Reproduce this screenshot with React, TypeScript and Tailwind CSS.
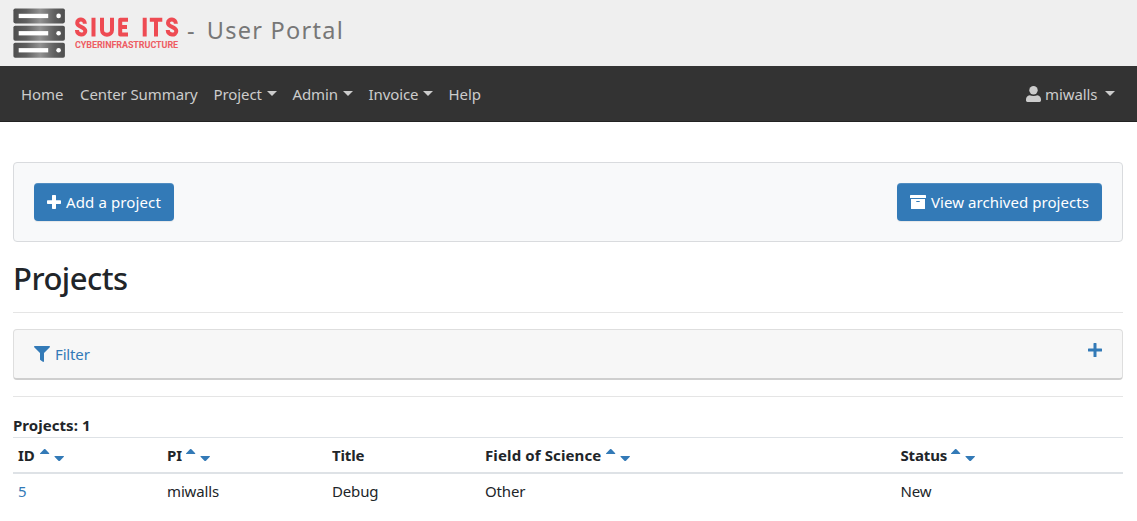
import type { ReactNode } from "react";
import { FaFilter } from "react-icons/fa";

function Caret({ className = "" }: { className?: string }) {
  return (
    <svg className={"h-[5px] w-[10px] shrink-0 " + className} viewBox="0 0 10 5" fill="currentColor">
      <path d="M0 0H10L5 5Z" />
    </svg>
  );
}

function Plus({ thick = false }: { thick?: boolean }) {
  return (
    <svg className="h-[14px] w-[14px] shrink-0" viewBox="0 0 14 14" fill="currentColor">
      {thick ? (
        <path d="M5.7 0h2.6q.7 0 .7.7V5.2h4.3q.7 0 .7.7v2.3q0 .7-.7.7H9v4.4q0 .7-.7.7H5.7q-.7 0-.7-.7V8.9H.7q-.7 0-.7-.7V5.9q0-.7.7-.7H5V.7q0-.7.7-.7Z" />
      ) : (
        <path d="M6 0h2q.5 0 .5.5V5.5h5q.5 0 .5.5v2q0 .5-.5.5h-5v5q0 .5-.5.5H6q-.5 0-.5-.5v-5h-5Q0 8.500 0 8V6q0-.5.5-.5h5V.5Q5.500 0 6 0Z" />
      )}
    </svg>
  );
}

function UserIcon() {
  return (
    <svg className="h-4 w-[15px] shrink-0" viewBox="0 0 15 16" fill="currentColor">
      <circle cx="7.500" cy="4.200" r="4.200" />
      <path d="M3.700 9.200C4.700 9.600 6 9.900 7.500 9.900S10.300 9.600 11.300 9.200C13.700 9.500 15 11.200 15 13.600V14.600Q15 16 13.600 16H1.400Q0 16 0 14.600V13.600C0 11.200 1.300 9.500 3.700 9.200Z" />
    </svg>
  );
}

function ArchiveIcon() {
  return (
    <svg className="h-[14px] w-4 shrink-0" viewBox="0 0 16 14" fill="currentColor">
      <path d="M.5 0h15q.5 0 .5.5V3H0V.5Q0 0 .5 0Z" />
      <path fillRule="evenodd" d="M1 4h14v9.400q0 .6-.6.6H1.600q-.6 0-.6-.6ZM6.300 6v1h3.400V6Z" />
    </svg>
  );
}

function SortArrows({ className = "ml-[5px]" }: { className?: string }) {
  return (
    <svg className={"h-3 w-6 shrink-0 " + className} viewBox="0 0 24 12" fill="#337ab7">
      <path d="M0 5Q-.2 4.600.2 4.200L4 .2Q4.700-.3 5.400.2L9.200 4.200Q9.500 4.700 9 5Z" />
      <path d="M14.600 7H23.800Q24.100 7.500 23.600 8L20 11.700Q19.200 12.300 18.400 11.700L14.800 8Q14.300 7.500 14.600 7Z" />
    </svg>
  );
}

function Logo() {
  return (
    <svg className="h-[66px] w-[180px] shrink-0 overflow-visible" viewBox="0 0 180 66">
      <defs>
        <linearGradient id="steel" x1="0" x2="1">
          <stop offset="0" stopColor="#4e4e4e" />
          <stop offset="0.25" stopColor="#606060" />
          <stop offset="0.52" stopColor="#929292" />
          <stop offset="0.8" stopColor="#606060" />
          <stop offset="1" stopColor="#4e4e4e" />
        </linearGradient>
      </defs>
      {[8.500, 25.800, 42.800].map((y) => (
        <g key={y}>
          <rect x="13.400" y={y} width="51.500" height="14.900" rx="1.800" fill="url(#steel)" />
          <rect x="18.700" y={y + 5.300} width="29.500" height="4.300" fill="#fff" />
          <circle cx="58.600" cy={y + 7.400} r="2.300" fill="#fff" />
        </g>
      ))}
      <g fill="none" stroke="#ee4b53" strokeWidth="4" strokeLinejoin="round">
        <path d="M84.900 23.800C84.900 18.300 77.200 18.300 77.200 23C77.200 27.400 85.300 26.200 85.300 31C85.300 36 76.900 35.800 76.900 30" />
        <path d="M93.500 17.800V36.500M102 17.800V30C102 36.200 112 36.200 112 30V17.800M128 19.700H120.200V34.600H128M120.200 27H127M144.700 17.800V36.500M149.800 19.700H162.300M156 19.700V36.500" />
        <path d="M175.900 23.800C175.900 18.300 168 18.300 168 23C168 27.400 176.300 26.200 176.300 31C176.300 36 167.700 35.800 167.700 30" />
      </g>
      <text x="75" y="48.200" textLength="103" fill="#ee5c63" fontFamily="Roboto, sans-serif" fontSize="9" fontWeight="700">
        CYBERINFRASTRUCTURE
      </text>
    </svg>
  );
}

function NavItem({ children, className, menu = false }: { children: ReactNode; className: string; menu?: boolean }) {
  return (
    <a className={"flex items-center whitespace-nowrap " + className} href="#">
      {children}
      {menu && <Caret className="-mt-px ml-auto" />}
    </a>
  );
}

export default function App() {
  return (
    <div className="h-[521px] overflow-hidden bg-white font-['Noto_Sans',sans-serif] text-[15px] leading-6 tracking-[-0.150px] text-[#212529]">
      <header className="flex h-[66px] items-center bg-[#efefef]">
        <Logo />
        <span className="ml-[7px] mt-[-6px] flex gap-[11px] whitespace-nowrap text-[23.500px] leading-8 tracking-[1.250px] text-[#777]">
          <span>-</span>
          <span>User Portal</span>
        </span>
      </header>
      <nav className="flex h-14 items-center border-b border-[#222] bg-[#333] pl-[21px] pr-[22px] tracking-[-0.100px] text-[#ccc]">
        <NavItem className="w-[59px]">Home</NavItem>
        <NavItem className="w-[133.500px]">Center Summary</NavItem>
        <NavItem className="mr-4 w-[63px]" menu>Project</NavItem>
        <NavItem className="mr-4 w-[60px]" menu>Admin</NavItem>
        <NavItem className="mr-4 w-16" menu>Invoice</NavItem>
        <NavItem className="">Help</NavItem>
        <a className="ml-auto flex w-[89px] items-center" href="#">
          <UserIcon />
          <span className="ml-1">miwalls</span>
          <Caret className="-mt-px ml-auto" />
        </a>
      </nav>
      <main className="pl-[13px] pr-[14px] pt-10">
        <section className="flex h-20 items-center justify-between rounded-[4px] border border-[#d9dbde] bg-[#f8f9fa] px-5">
          <button className="flex h-[38px] w-[140px] items-center rounded-[4px] bg-[#337ab7] pl-[13px] text-white shadow-[inset_0_1px_0_rgba(255,255,255,0.15),0_1px_1px_rgba(0,0,0,0.075)]">
            <Plus thick />
            <span className="ml-[5px] whitespace-nowrap tracking-[0.120px]">Add a project</span>
          </button>
          <button className="flex h-[38px] w-[205px] items-center rounded-[4px] bg-[#337ab7] pl-[13px] text-white shadow-[inset_0_1px_0_rgba(255,255,255,0.15),0_1px_1px_rgba(0,0,0,0.075)]">
            <ArchiveIcon />
            <span className="ml-[5px] whitespace-nowrap tracking-[0.050px]">View archived projects</span>
          </button>
        </section>
        <h2 className="mt-[17px] box-content h-[53px] border-b border-[#e5e5e5] text-[31px] font-medium leading-[38px] tracking-[-0.500px]">
          Projects
        </h2>
        <section className="mt-4 flex h-[51px] justify-between rounded-[4px] border border-b-2 border-[#dedede] border-b-[#cfcfcf] bg-[#f7f7f7] pl-5 pr-5 text-[#337ab7]">
          <a className="flex h-12 items-center" href="#">
            <FaFilter className="size-4" />
            <span className="ml-[5px]">Filter</span>
          </a>
          <span className="pt-[13px]">
            <Plus />
          </span>
        </section>
        <hr className="mt-4 border-[#e5e5e5]" />
        <p className="mt-4 h-6 font-bold tracking-[0.050px]">Projects: 1</p>
        <table className="w-full table-fixed border-collapse text-left">
          <colgroup>
            <col className="w-[149px]" />
            <col className="w-[165px]" />
            <col className="w-[153px]" />
            <col className="w-[415.500px]" />
            <col />
          </colgroup>
          <thead>
            <tr className="h-[35px] border-b-2 border-t border-b-[#dee2e6] border-t-[#dee2e6] font-bold">
              <th className="p-0 pl-[5px]"><span className="flex items-center">ID<SortArrows /></span></th>
              <th className="p-0 pl-[5px]"><span className="flex items-center">PI<SortArrows className="ml-1" /></span></th>
              <th className="p-0 pl-[5px]"><span className="flex items-center">Title</span></th>
              <th className="p-0 pl-[5px]"><span className="flex items-center tracking-[0.120px]">Field of Science<SortArrows /></span></th>
              <th className="p-0 pl-[5px]"><span className="flex items-center">Status<SortArrows className="ml-1" /></span></th>
            </tr>
          </thead>
          <tbody>
            <tr className="h-[35px]">
              <td className="p-0 pl-[5px]"><a className="text-[#337ab7]" href="#">5</a></td>
              <td className="p-0 pl-[5px]">miwalls</td>
              <td className="p-0 pl-[5px]">Debug</td>
              <td className="p-0 pl-[5px]">Other</td>
              <td className="p-0 pl-[5px]">New</td>
            </tr>
          </tbody>
        </table>
      </main>
    </div>
  );
}
